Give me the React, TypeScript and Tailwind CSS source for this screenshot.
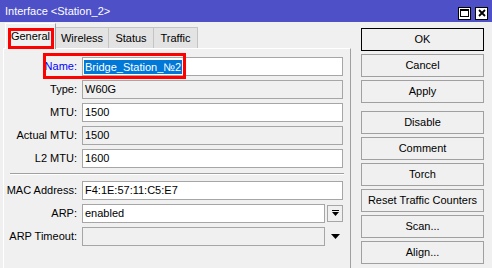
import React from 'react';

type Field = {
  label: string;
  value: string;
  readOnly?: boolean;
  blue?: boolean;
  selected?: boolean;
  extra?: 'dropdown' | 'arrow';
};

const topFields: Field[] = [
  { label: 'Name:', value: 'Bridge_Station_№2', blue: true, selected: true },
  { label: 'Type:', value: 'W60G', readOnly: true },
  { label: 'MTU:', value: '1500' },
  { label: 'Actual MTU:', value: '1500', readOnly: true },
  { label: 'L2 MTU:', value: '1600' },
];

const bottomFields: Field[] = [
  { label: 'MAC Address:', value: 'F4:1E:57:11:C5:E7' },
  { label: 'ARP:', value: 'enabled', extra: 'dropdown' },
  { label: 'ARP Timeout:', value: '', readOnly: true, extra: 'arrow' },
];

const tabs = [
  { name: 'General', w: 'w-[51px]' },
  { name: 'Wireless', w: 'w-[53px]' },
  { name: 'Status', w: 'w-[45px]' },
  { name: 'Traffic', w: 'w-[44px]' },
];

const actions = ['OK', 'Cancel', 'Apply', 'Disable', 'Comment', 'Torch', 'Reset Traffic Counters', 'Scan...', 'Align...'];

const Row: React.FC<{ f: Field }> = ({ f }) => (
  <div className="flex items-center h-[19px]">
    <span className={`w-[74px] text-right pr-[1px] ${f.blue ? 'text-[#0000ff]' : 'text-black'}`}>{f.label}</span>
    <div className="ml-[4px] flex items-center">
      <div
        className={`h-[19px] border border-[#a6a6a6] flex items-center px-[1px] ${f.readOnly ? 'bg-[#f0f0f0]' : 'bg-white'} ${f.extra ? 'w-[243px]' : 'w-[261px]'}`}
      >
        {f.selected ? (
          <span className="bg-[#0078d7] text-white px-[1px] leading-[14px]">{f.value}</span>
        ) : (
          <span className="px-[1px]">{f.value}</span>
        )}
      </div>
      {f.extra === 'dropdown' && (
        <div className="ml-[2px] w-[16px] h-[17px] border border-[#a6a6a6] flex items-center justify-center">
          <svg width="9" height="9" viewBox="0 0 9 9">
            <rect x="1" y="1" width="7" height="1" fill="#000" />
            <polygon points="1,3 8,3 4.5,7" fill="#000" />
          </svg>
        </div>
      )}
      {f.extra === 'arrow' && (
        <div className="ml-[2px] w-[16px] h-[17px] flex items-center justify-center">
          <svg width="9" height="6" viewBox="0 0 9 6">
            <polygon points="0,0 9,0 4.5,5" fill="#000" />
          </svg>
        </div>
      )}
    </div>
  </div>
);

const App: React.FC = () => {
  return (
    <div className="w-[492px] h-[268px] bg-[#f0f0f0] relative overflow-hidden text-[11px] text-black font-['Liberation_Sans',Arial,sans-serif] flex flex-col">
      {/* title bar */}
      <div className="h-[22px] shrink-0 bg-[#4e50c8] text-white flex items-center justify-between pl-[5px] pr-[4px]">
        <span className="text-[11px]">Interface &lt;Station_2&gt;</span>
        <div className="flex gap-[4px] mt-[4px]">
          <div className="w-[13px] h-[13px] bg-white border border-black flex items-center justify-center">
            <div className="w-[9px] h-[8px] border border-black border-t-2" />
          </div>
          <div className="w-[13px] h-[13px] bg-white border border-black flex items-center justify-center">
            <svg width="8" height="8" viewBox="0 0 8 8">
              <path d="M1 1 L7 7 M7 1 L1 7" stroke="#000" strokeWidth="1.8" />
            </svg>
          </div>
        </div>
      </div>

      <div className="flex flex-1">
        {/* left side */}
        <div className="ml-[3px] w-[348px] flex flex-col">
          <div className="h-[26px] flex items-end pl-[2px]">
            {tabs.map((t, i) => (
              <div
                key={t.name}
                className={
                  i === 0
                    ? `${t.w} h-[26px] flex items-center justify-center bg-[#f0f0f0] border-l border-t border-r border-white border-r-[#a0a0a0] -mb-[1px] relative z-10`
                    : `${t.w} h-[21px] flex items-center justify-center bg-[#e3e3e3] border-t border-r border-[#c4c4c4] border-l-0`
                }
              >
                {t.name}
              </div>
            ))}
          </div>
          <div className="flex-1 border-t border-l border-white border-r border-r-[#a0a0a0] pt-[8px] flex flex-col">
            <div className="flex flex-col gap-[4px]">
              {topFields.map((f) => (
                <Row key={f.label} f={f} />
              ))}
            </div>
            <div className="ml-[6px] mr-[6px] mt-[5px] mb-[6px] border-t border-[#a0a0a0] border-b border-b-white" />
            <div className="flex flex-col gap-[4px]">
              {bottomFields.map((f) => (
                <Row key={f.label} f={f} />
              ))}
            </div>
          </div>
        </div>

        {/* buttons */}
        <div className="pl-[10px] pt-[6px] flex flex-col">
          {actions.map((a, i) => (
            <div
              key={a}
              className={`w-[123px] h-[23px] flex items-center justify-center bg-[#f0f0f0] border ${i === 0 ? 'border-black' : 'border-[#a0a0a0]'} ${i === 3 ? 'mt-[8px]' : i === 0 ? '' : 'mt-[3px]'}`}
            >
              {a}
            </div>
          ))}
        </div>
      </div>

      {/* red highlight boxes */}
      <div className="absolute z-20 left-[8px] top-[28px] w-[46px] h-[21px] border-[3px] border-[#ff0000]" />
      <div className="absolute z-20 left-[43px] top-[53px] w-[143px] h-[26px] border-[3px] border-[#ff0000]" />
    </div>
  );
};

export default App;
